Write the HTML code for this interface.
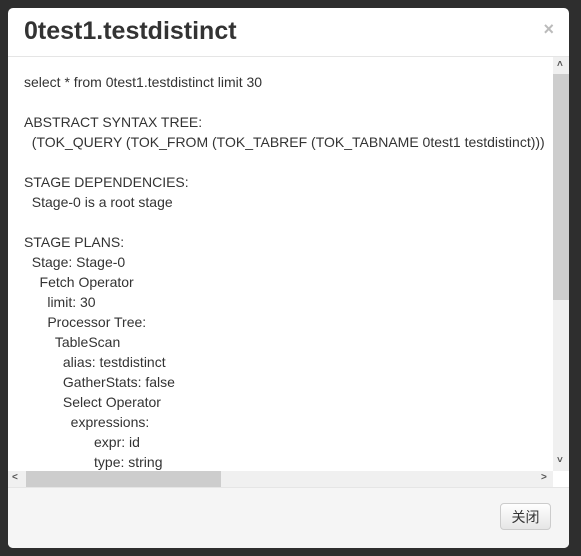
<!DOCTYPE html><html><head><meta charset="utf-8"><style>
body{margin:0;width:581px;height:556px;background:#2e2e2e;position:relative;overflow:hidden;font-family:"Liberation Sans",Arial,sans-serif}
.m{position:absolute;left:8px;top:8px;width:561px;height:540px;background:#fff;border-radius:5px;overflow:hidden}
.h{height:48px;border-bottom:1px solid #e5e5e5;position:relative}
.h h3{margin:0;position:absolute;left:16px;top:9px;font-size:25px;font-weight:bold;color:#333}
.x{position:absolute;right:15px;top:11px;color:#bbb;font-size:18px;font-weight:bold}
.b{position:absolute;top:49px;left:0;width:545px;height:414px;overflow:hidden}
.t{position:absolute;left:16px;top:15px;font-size:14px;line-height:20px;color:#333;white-space:pre}
.vs{position:absolute;left:545px;top:49px;width:16px;height:414px;background:#f0f0f0}
.vt{position:absolute;left:0;top:17px;width:16px;height:226px;background:#cdcdcd}
.hs{position:absolute;left:0;top:463px;width:545px;height:16px;background:#f0f0f0}
.ht{position:absolute;left:18px;top:0;width:195px;height:16px;background:#cdcdcd}
.ar{position:absolute;font-size:10px;color:#555;font-weight:bold}
.f{position:absolute;left:0;top:479px;width:561px;height:61px;background:#f5f5f5;border-top:1px solid #e5e5e5}
.btn{position:absolute;left:492px;top:15px;width:51px;height:27px;border:1px solid #ccc;border-radius:4px;background:linear-gradient(#fff,#e6e6e6);font-family:"Liberation Sans","Noto Sans CJK SC",sans-serif;font-size:14px;color:#333;text-align:center;line-height:27px;box-sizing:border-box}
</style></head><body>
<div class="m">
<div class="h"><h3>0test1.testdistinct</h3><span class="x">×</span></div>
<div class="b"><div class="t">select * from 0test1.testdistinct limit 30

ABSTRACT SYNTAX TREE:
  (TOK_QUERY (TOK_FROM (TOK_TABREF (TOK_TABNAME 0test1 testdistinct)))

STAGE DEPENDENCIES:
  Stage-0 is a root stage

STAGE PLANS:
  Stage: Stage-0
    Fetch Operator
      limit: 30
      Processor Tree:
        TableScan
          alias: testdistinct
          GatherStats: false
          Select Operator
            expressions:
                  expr: id
                  type: string</div></div>
<div class="vs"><div class="vt"></div><span class="ar" style="left:4px;top:2px">˄</span><span class="ar" style="left:4px;top:398px">˅</span></div>
<div class="hs"><div class="ht"></div><span class="ar" style="left:4px;top:1px">&lt;</span><span class="ar" style="left:533px;top:1px">&gt;</span></div>
<div class="f"><div class="btn">关闭</div></div>
</div>
</body></html>
